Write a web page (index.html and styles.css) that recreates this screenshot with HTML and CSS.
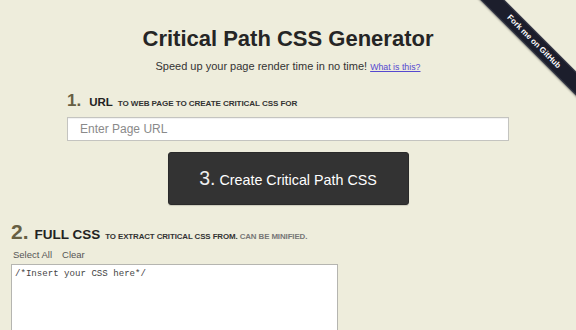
FILE: index.html
```html
<!DOCTYPE html>
<html>
<head>
<meta charset="utf-8">
<title>Critical Path CSS Generator</title>
<link rel="stylesheet" href="styles.css">
</head>
<body>
<div class="ribbon-wrap"><a class="ribbon" href="#">Fork me on GitHub</a></div>
<header class="head">
  <h1 class="title">Critical Path CSS Generator</h1>
  <p class="sub">Speed up your page render time in no time! <a class="what" href="#">What is this?</a></p>
</header>
<section class="step1">
  <h2 class="step-head small"><span class="num">1.</span><span class="lbl">URL</span><span class="hint">TO WEB PAGE TO CREATE CRITICAL CSS FOR</span></h2>
  <input class="url" type="text" placeholder="Enter Page URL">
</section>
<div class="btn-row">
  <button class="create"><span class="bnum">3.</span> Create Critical Path CSS</button>
</div>
<section class="step2">
  <h2 class="step-head big"><span class="num">2.</span><span class="lbl">FULL CSS</span><span class="hint">TO EXTRACT CRITICAL CSS FROM. <span class="light">CAN BE MINIFIED.</span></span></h2>
  <div class="tools"><a class="tool" href="#">Select All</a><a class="tool" href="#">Clear</a></div>
  <textarea class="css-in">/*Insert your CSS here*/</textarea>
</section>
</body>
</html>
```

FILE: styles.css
```css
html, body {
  margin: 0;
  padding: 0;
  background: #eeeddc;
  height: 100%;
  overflow: hidden;
}
body {
  font-family: "Liberation Sans", Arial, sans-serif;
  color: #222;
}
.ribbon-wrap {
  position: absolute;
  top: 0;
  right: 0;
  width: 130px;
  height: 130px;
  overflow: hidden;
}
.ribbon {
  position: absolute;
  left: -12px;
  top: 33px;
  width: 200px;
  height: 17px;
  line-height: 15px;
  background: #1c1e2c;
  color: #fff;
  font-weight: bold;
  font-size: 8px;
  text-align: center;
  text-decoration: none;
  transform: rotate(45deg);
  box-shadow: 0 1px 2px rgba(0,0,0,0.35);
  border-top: 1px solid #3b3e4c;
  border-bottom: 1px solid #3b3e4c;
  box-sizing: border-box;
}
.head {
  text-align: center;
  padding-top: 26px;
}
.title {
  margin: 0;
  font-size: 22px;
  line-height: 26px;
  font-weight: bold;
  color: #252525;
}
.sub {
  margin: 7px 0 0;
  font-size: 11px;
  line-height: 14px;
  color: #333;
}
.what {
  font-size: 8.8px;
  line-height: 1;
  color: #5548d0;
  text-decoration: underline;
}
.step1 {
  width: 442px;
  margin: 19px auto 0;
}
.step-head {
  margin: 0;
  display: flex;
  align-items: baseline;
  font-weight: bold;
  white-space: nowrap;
  line-height: 1;
  font-size: 10px;
}
.step-head span {
  line-height: 1;
}
.step-head.small .num {
  font-size: 17px;
  color: #675f43;
  margin-right: 8px;
}
.step-head.small .lbl {
  font-size: 11.5px;
  color: #222;
  margin-right: 5px;
}
.step-head .hint {
  font-size: 8.1px;
  color: #333;
  letter-spacing: -0.1px;
}
.step-head .light {
  color: #777;
}
.url {
  display: block;
  box-sizing: border-box;
  width: 442px;
  height: 24px;
  margin-top: 8px;
  border: 1px solid #c4c4c0;
  box-shadow: inset 0 1px 1px rgba(0,0,0,0.06);
  background: #fff;
  padding: 0 12px;
  font-family: "Liberation Sans", Arial, sans-serif;
  font-size: 12px;
  outline: none;
}
.url::placeholder {
  color: #8a8a8a;
}
.btn-row {
  display: flex;
  justify-content: center;
  margin-top: 11px;
}
.create {
  width: 241px;
  height: 53px;
  background: #333;
  border: 1px solid #2a2a2a;
  border-radius: 3px;
  color: #fff;
  font-family: "Liberation Sans", Arial, sans-serif;
  font-size: 14.3px;
  padding: 0;
  box-shadow: 0 1px 1px rgba(0,0,0,0.15);
}
.bnum {
  font-size: 19.5px;
  color: #eee;
}
.step2 {
  padding-left: 11px;
  margin-top: 16px;
}
.step-head.big .num {
  font-size: 21px;
  color: #675f43;
  margin-right: 6px;
}
.step-head.big .lbl {
  font-size: 13.5px;
  color: #222;
  margin-right: 5px;
}
.step-head.big .hint {
  font-size: 7.9px;
}
.tools {
  display: flex;
  gap: 10px;
  margin-top: 7px;
  padding-left: 2px;
  line-height: 12px;
}
.tool {
  font-size: 9.5px;
  color: #555;
  text-decoration: none;
}
.css-in {
  display: block;
  box-sizing: border-box;
  width: 327px;
  height: 120px;
  margin-top: 3px;
  border: 1px solid #b5b5b0;
  background: #fff;
  padding: 3px 3px;
  font-family: "Liberation Mono", "Courier New", monospace;
  font-size: 9.1px;
  line-height: 11px;
  color: #444;
  resize: none;
}
```
